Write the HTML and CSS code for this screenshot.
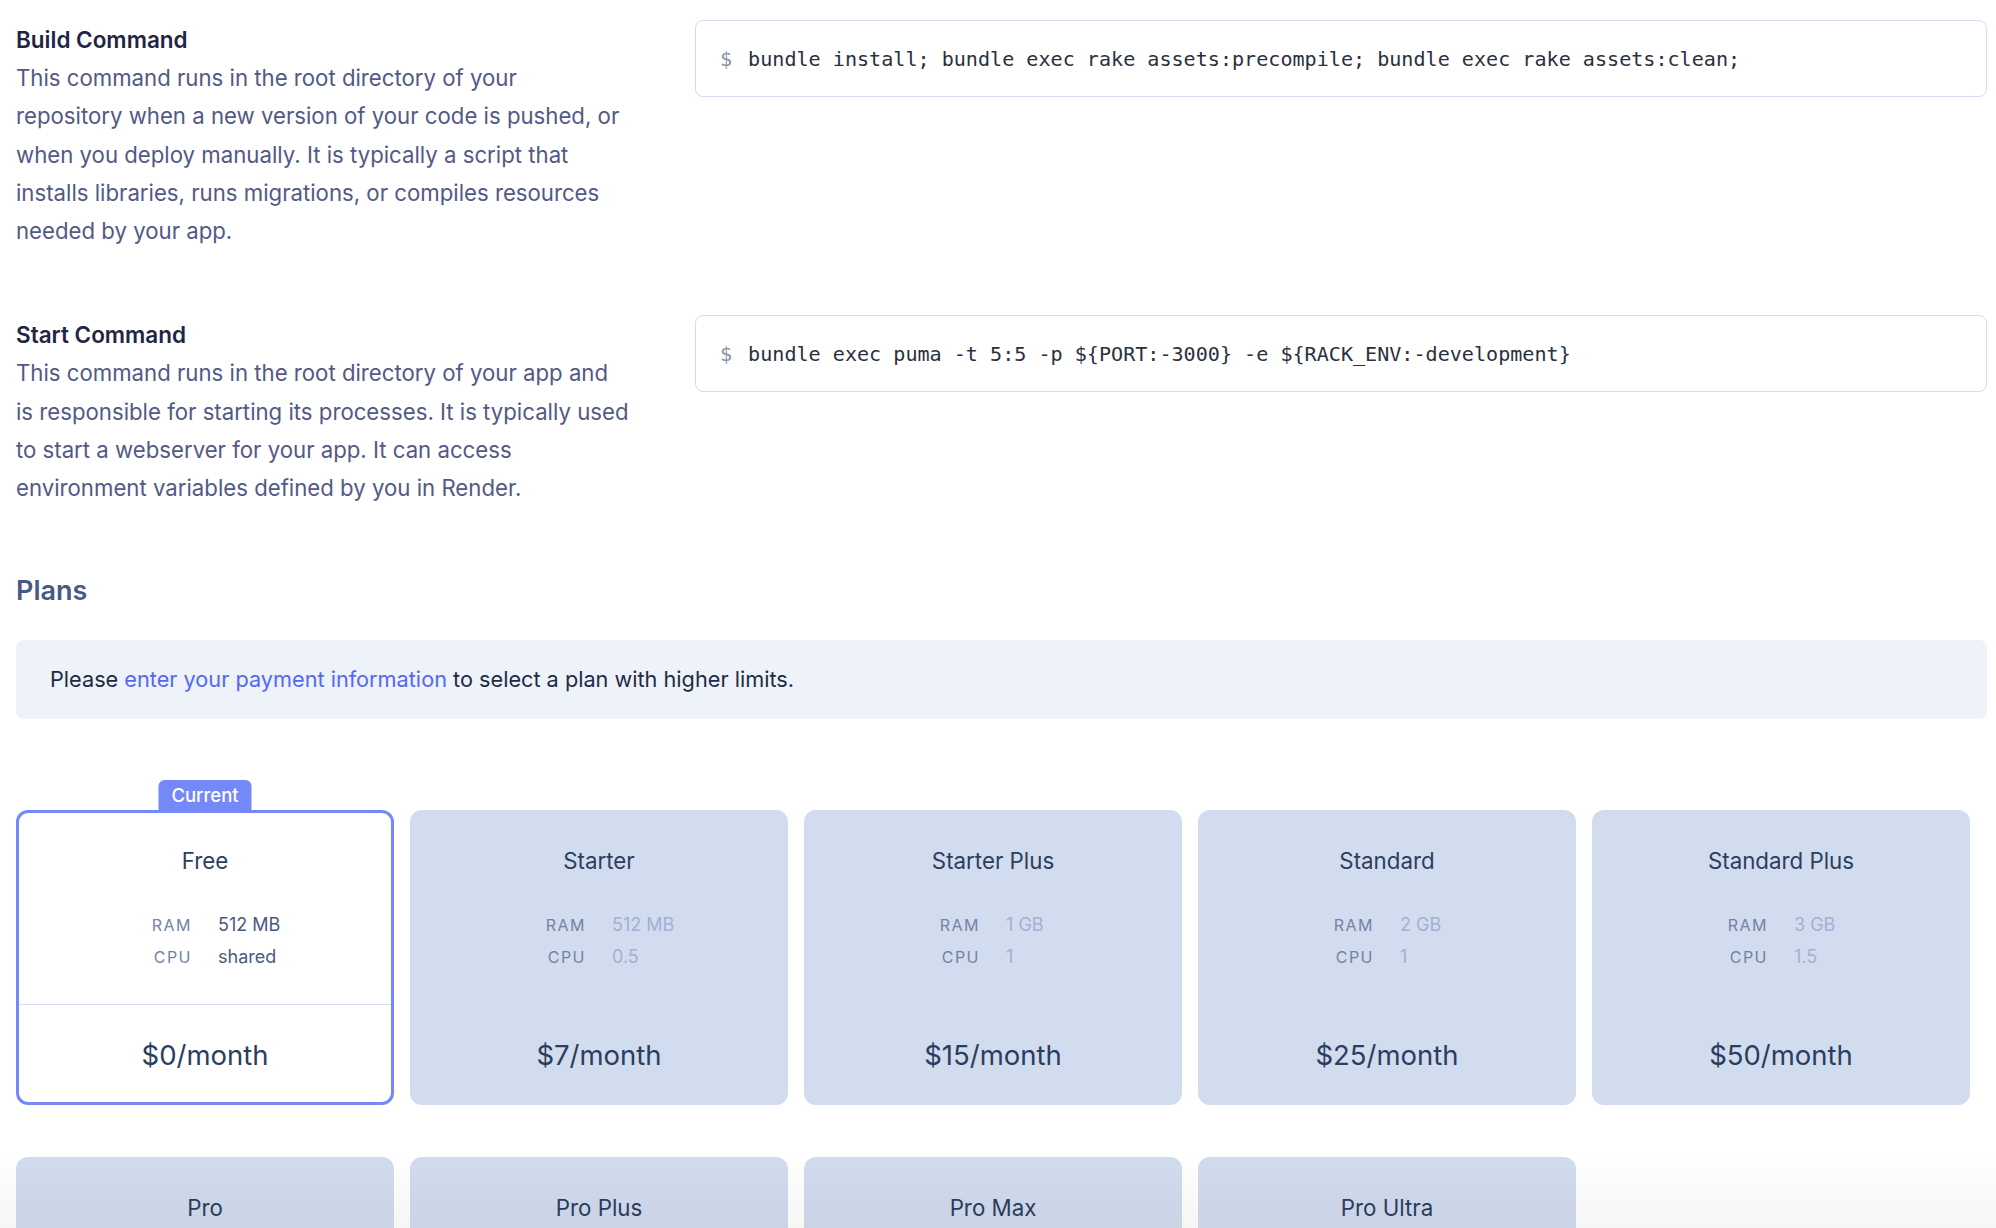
FILE: index.html
```html
<!DOCTYPE html>
<html lang="en">
<head>
<meta charset="utf-8">
<title>Service settings</title>
<link rel="stylesheet" href="styles.css">
</head>
<body>
<main class="page">
  <section class="cmd-row">
    <div class="cmd-info">
      <h3 class="cmd-title">Build Command</h3>
      <p class="cmd-desc">This command runs in the root directory of your repository when a new version of your code is pushed, or when you deploy manually. It is typically a script that installs libraries, runs migrations, or compiles resources needed by your app.</p>
    </div>
    <div class="cmd-box"><span class="prompt">$</span><code class="cmd-code">bundle install; bundle exec rake assets:precompile; bundle exec rake assets:clean;</code></div>
  </section>

  <section class="cmd-row">
    <div class="cmd-info">
      <h3 class="cmd-title">Start Command</h3>
      <p class="cmd-desc cmd-desc-wide">This command runs in the root directory of your app and<br>is responsible for starting its processes. It is typically used to start a webserver for your app. It can access environment variables defined by you in Render.</p>
    </div>
    <div class="cmd-box"><span class="prompt">$</span><code class="cmd-code">bundle exec puma -t 5:5 -p ${PORT:-3000} -e ${RACK_ENV:-development}</code></div>
  </section>

  <h2 class="plans-title">Plans</h2>
  <div class="notice">Please&nbsp;<a class="notice-link" href="#">enter your payment information</a>&nbsp;to select a plan with higher limits.</div>

  <div class="plan-grid">
    <div class="plan-cell">
      <span class="badge">Current</span>
      <div class="plan plan-current">
        <div class="plan-name">Free</div>
        <dl class="specs"><dt>RAM</dt><dd>512 MB</dd><dt>CPU</dt><dd>shared</dd></dl>
        <div class="plan-divider"></div>
        <div class="plan-price">$0/month</div>
      </div>
    </div>
    <div class="plan-cell">
      <div class="plan">
        <div class="plan-name">Starter</div>
        <dl class="specs"><dt>RAM</dt><dd>512 MB</dd><dt>CPU</dt><dd>0.5</dd></dl>
        <div class="plan-divider"></div>
        <div class="plan-price">$7/month</div>
      </div>
    </div>
    <div class="plan-cell">
      <div class="plan">
        <div class="plan-name">Starter Plus</div>
        <dl class="specs"><dt>RAM</dt><dd>1 GB</dd><dt>CPU</dt><dd>1</dd></dl>
        <div class="plan-divider"></div>
        <div class="plan-price">$15/month</div>
      </div>
    </div>
    <div class="plan-cell">
      <div class="plan">
        <div class="plan-name">Standard</div>
        <dl class="specs"><dt>RAM</dt><dd>2 GB</dd><dt>CPU</dt><dd>1</dd></dl>
        <div class="plan-divider"></div>
        <div class="plan-price">$25/month</div>
      </div>
    </div>
    <div class="plan-cell">
      <div class="plan">
        <div class="plan-name">Standard Plus</div>
        <dl class="specs"><dt>RAM</dt><dd>3 GB</dd><dt>CPU</dt><dd>1.5</dd></dl>
        <div class="plan-divider"></div>
        <div class="plan-price">$50/month</div>
      </div>
    </div>
    <div class="plan-cell">
      <div class="plan">
        <div class="plan-name">Pro</div>
        <dl class="specs"><dt>RAM</dt><dd>4 GB</dd><dt>CPU</dt><dd>2</dd></dl>
        <div class="plan-divider"></div>
        <div class="plan-price">$85/month</div>
      </div>
    </div>
    <div class="plan-cell">
      <div class="plan">
        <div class="plan-name">Pro Plus</div>
        <dl class="specs"><dt>RAM</dt><dd>8 GB</dd><dt>CPU</dt><dd>4</dd></dl>
        <div class="plan-divider"></div>
        <div class="plan-price">$175/month</div>
      </div>
    </div>
    <div class="plan-cell">
      <div class="plan">
        <div class="plan-name">Pro Max</div>
        <dl class="specs"><dt>RAM</dt><dd>16 GB</dd><dt>CPU</dt><dd>4</dd></dl>
        <div class="plan-divider"></div>
        <div class="plan-price">$225/month</div>
      </div>
    </div>
    <div class="plan-cell">
      <div class="plan">
        <div class="plan-name">Pro Ultra</div>
        <dl class="specs"><dt>RAM</dt><dd>32 GB</dd><dt>CPU</dt><dd>8</dd></dl>
        <div class="plan-divider"></div>
        <div class="plan-price">$450/month</div>
      </div>
    </div>
  </div>
</main>
<div class="fade"></div>
</body>
</html>
```

FILE: styles.css
```css
* { box-sizing: border-box; }

html, body {
  margin: 0;
  padding: 0;
  background: #ffffff;
}

body {
  font-family: Inter, "Noto Sans", "Liberation Sans", sans-serif;
  color: #2c3e5f;
  overflow: hidden;
}

.page {
  padding: 20px 9px 0 16px;
}

.cmd-row {
  display: grid;
  grid-template-columns: 655px 1fr;
  column-gap: 24px;
  align-items: start;
  margin-bottom: 65px;
}

.cmd-info {
  padding-top: 5px;
}

.cmd-title {
  margin: 0;
  font-size: 22.5px;
  line-height: 30px;
  font-weight: 600;
  color: #1f2544;
}

.cmd-desc {
  margin: 4px 0 0;
  max-width: 612px;
  font-size: 22.2px;
  line-height: 38.3px;
  color: #535985;
}

.cmd-desc-wide {
  max-width: 632px;
}

.cmd-box {
  height: 77px;
  display: flex;
  align-items: center;
  padding: 0 24px;
  border: 1px solid #d3ddef;
  border-radius: 8px;
  font-family: "DejaVu Sans Mono", "Liberation Mono", monospace;
  font-size: 20.1px;
  white-space: pre;
}

.prompt {
  color: #8a93a6;
  margin-right: 16px;
}

.cmd-code {
  font-family: inherit;
  color: #2b3040;
}

.plans-title {
  margin: 2px 0 0;
  font-size: 27px;
  line-height: 36px;
  font-weight: 600;
  color: #475a85;
}

.notice {
  margin-top: 31px;
  height: 79px;
  display: flex;
  align-items: center;
  padding: 0 34px;
  background: #eef2f9;
  border-radius: 8px;
  font-size: 21.7px;
  color: #1f2b46;
}

.notice-link {
  color: #5468f2;
  text-decoration: none;
}

.plan-grid {
  margin-top: 55px;
  display: grid;
  grid-template-columns: repeat(5, 378px);
  column-gap: 16px;
  row-gap: 16px;
}

.plan-cell {
  position: relative;
  padding-top: 36px;
}

.badge {
  position: absolute;
  top: 6px;
  left: 50%;
  transform: translateX(-50%);
  width: 93px;
  height: 31px;
  display: flex;
  align-items: center;
  justify-content: center;
  background: #7489f7;
  color: #ffffff;
  font-size: 18.5px;
  font-weight: 500;
  border-radius: 6px 6px 0 0;
}

.plan {
  height: 295px;
  border: 3px solid transparent;
  border-radius: 12px;
  background: #d1dcee;
  padding-top: 35px;
  display: flex;
  flex-direction: column;
  align-items: stretch;
  text-align: center;
}

.plan-current {
  background: #ffffff;
  border-color: #7489f7;
}

.plan-name {
  font-size: 22.3px;
  line-height: 26px;
  color: #2c3e5f;
}

.specs {
  margin: 35px 0 0;
  display: grid;
  grid-template-columns: 1fr 1fr;
  line-height: 32px;
}

.specs dt {
  text-align: right;
  padding-right: 13px;
  font-size: 16px;
  letter-spacing: 1.5px;
  color: #7283a7;
}

.specs dd {
  margin: 0;
  text-align: left;
  padding-left: 13px;
  font-size: 18px;
  color: #a3b0d6;
}

.plan-current .specs dd {
  color: #4a5a7f;
}

.plan-divider {
  margin-top: 31px;
  height: 1px;
  background: transparent;
}

.plan-current .plan-divider {
  background: #d4ddee;
}

.plan-price {
  margin-top: 32px;
  font-size: 27.5px;
  line-height: 36px;
  color: #2c3e5f;
}

.fade {
  position: fixed;
  left: 0;
  right: 0;
  bottom: 0;
  height: 80px;
  background: linear-gradient(to bottom, rgba(0, 0, 0, 0), rgba(0, 0, 0, 0.035));
  pointer-events: none;
}
```
